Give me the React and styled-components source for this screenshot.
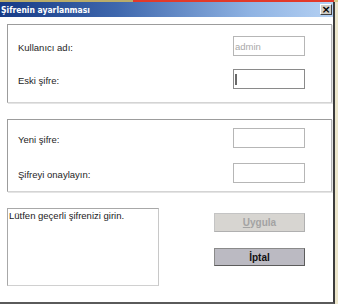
import React from 'react'
import styled, { createGlobalStyle } from 'styled-components'

const GlobalStyle = createGlobalStyle`
  *, *::before, *::after {
    box-sizing: border-box;
  }
  html, body {
    margin: 0;
    padding: 0;
    background: #ece6cc;
  }
  body {
    font-family: "Liberation Sans", Arial, sans-serif;
  }
`

const Screen = styled.div`
  width: 338px;
  height: 304px;
  overflow: hidden;
  display: flex;
  flex-direction: column;
`

const BackStrip = styled.div`
  height: 2px;
  flex-shrink: 0;
  background: linear-gradient(to right, #b9ac6a 0, #b9ac6a 133px, #e2392a 133px, #e2392a 334px, #d6c98a 334px);
`

const Window = styled.div`
  width: 335px;
  height: 302px;
  background: #fff;
  border-right: 2px solid #3c3c3c;
  border-bottom: 2px solid #5a5a5a;
  display: flex;
  flex-direction: column;
`

const TitleBar = styled.div`
  height: 15px;
  flex-shrink: 0;
  display: flex;
  align-items: center;
  justify-content: space-between;
  padding: 0 1px 0 1px;
  background: linear-gradient(to right, #163a86 0%, #3e67ad 35%, #8fb3e3 75%, #b5d1f3 100%);
`

const Title = styled.span`
  color: #fff;
  font-family: "DejaVu Sans Condensed", "DejaVu Sans", sans-serif;
  font-weight: bold;
  font-size: 8.5px;
`

const CloseButton = styled.div`
  width: 12px;
  height: 11px;
  background: #d0cdc5;
  border: 1px solid;
  border-color: #fff #404040 #404040 #fff;
  display: flex;
  align-items: center;
  justify-content: center;
  font-family: "DejaVu Sans", sans-serif;
  font-weight: bold;
  font-size: 11px;
  line-height: 1;
  color: #000;
`

const Content = styled.div`
  flex: 1;
  padding: 7px 0 0 7px;
  display: flex;
  flex-direction: column;
`

const Group = styled.div`
  width: 325px;
  border: 1px solid #9c9c9c;
  border-right-color: #b4b4b4;
  border-bottom-color: #d4d4d4;
  box-shadow: 1px 1px 0 #e4e4e4;
  display: flex;
  flex-direction: column;
  gap: ${p => p.$gap}px;
  padding: ${p => p.$pad};
  margin-bottom: 16px;
`

const Row = styled.div`
  display: flex;
  align-items: center;
  justify-content: space-between;
  height: 20px;
`

const Label = styled.span`
  font-size: 9.5px;
  color: #1e1e1e;
  padding-top: 3px;
`

const Field = styled.div`
  width: 72px;
  height: 20px;
  border: 1px solid ${p => (p.$focused ? '#8a8a8a' : '#b6b6b6')};
  background: #fff;
  display: flex;
  align-items: center;
  padding-left: 1px;
  font-size: 9.5px;
  color: #a8a8a8;
`

const Caret = styled.span`
  width: 2px;
  height: 11px;
  background: #6a6a6a;
`

const Bottom = styled.div`
  display: flex;
  align-items: flex-start;
`

const Message = styled.div`
  width: 152px;
  height: 78px;
  border: 1px solid #a8a8a8;
  border-right-color: #c8c8c8;
  border-bottom-color: #d0d0d0;
  font-size: 9.5px;
  color: #1a1a1a;
  padding: 1px 0 0 1px;
  line-height: 12px;
`

const Buttons = styled.div`
  margin-left: 55px;
  margin-top: 5px;
  display: flex;
  flex-direction: column;
  gap: 16px;
`

const Button = styled.div`
  width: 91px;
  height: ${p => (p.$disabled ? 19 : 18)}px;
  display: flex;
  align-items: center;
  justify-content: center;
  font-size: 10px;
  font-weight: bold;
  font-family: "Liberation Sans", Arial, sans-serif;
  background: ${p => (p.$disabled ? '#d7d5d1' : '#bbbac2')};
  color: ${p => (p.$disabled ? '#a3a3a3' : '#111')};
  border: 1px solid;
  border-color: ${p => (p.$disabled ? '#c4c4c4 #b0b0b0 #b0b0b0 #c4c4c4' : '#8a8a8a #5c5c5c #5c5c5c #8a8a8a')};
`

const Accel = styled.span`
  text-decoration: underline;
`

export default function App() {
  return (
    <Screen>
      <GlobalStyle />
      <BackStrip />
      <Window>
        <TitleBar>
          <Title>Şifrenin ayarlanması</Title>
          <CloseButton>×</CloseButton>
        </TitleBar>
        <Content>
          <Group $gap={13} $pad="11px 26px 13px 10px">
            <Row>
              <Label>Kullanıcı adı:</Label>
              <Field>admin</Field>
            </Row>
            <Row>
              <Label>Eski şifre:</Label>
              <Field $focused><Caret /></Field>
            </Row>
          </Group>
          <Group $gap={15} $pad="8px 26px 8px 10px">
            <Row>
              <Label>Yeni şifre:</Label>
              <Field />
            </Row>
            <Row>
              <Label>Şifreyi onaylayın:</Label>
              <Field />
            </Row>
          </Group>
          <Bottom>
            <Message>Lütfen geçerli şifrenizi girin.</Message>
            <Buttons>
              <Button $disabled><Accel>U</Accel>ygula</Button>
              <Button>İptal</Button>
            </Buttons>
          </Bottom>
        </Content>
      </Window>
    </Screen>
  )
}
